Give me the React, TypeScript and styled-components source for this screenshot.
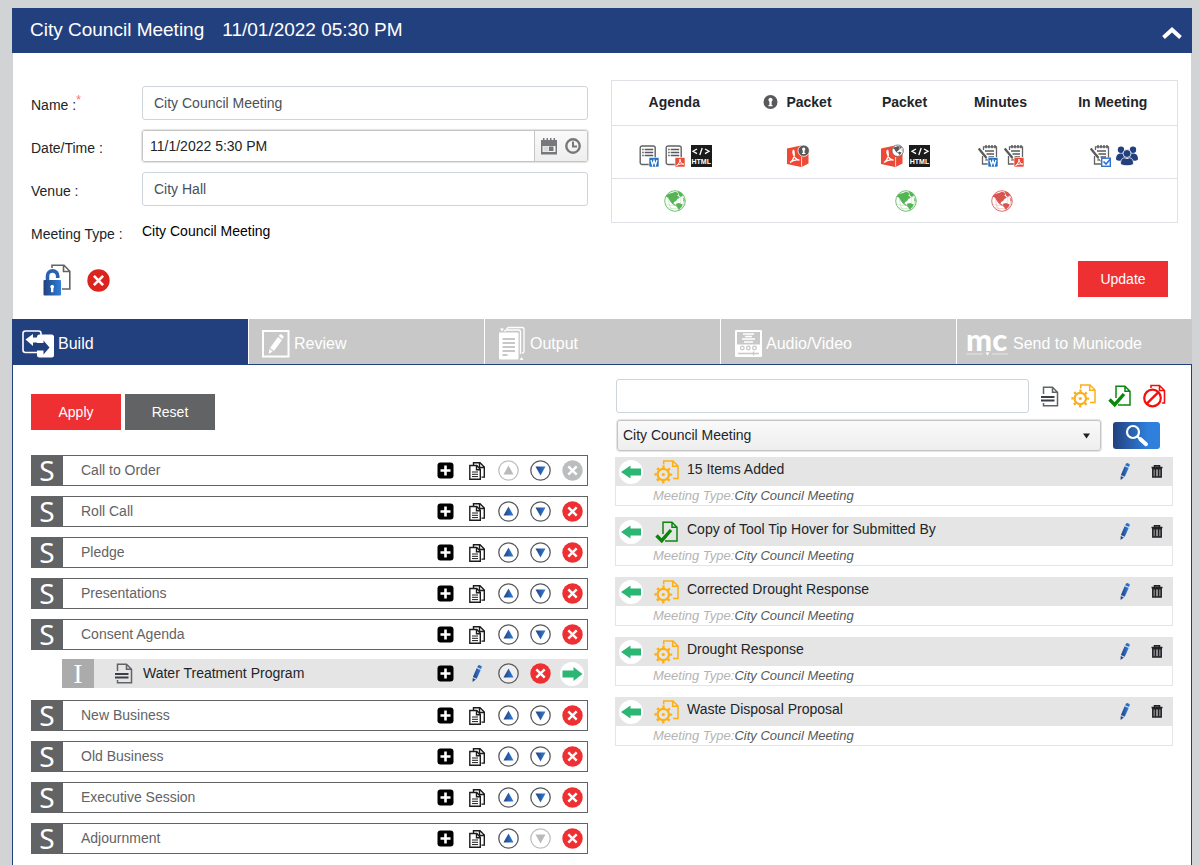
import React from "react";
import styled, { createGlobalStyle, css } from "styled-components";

const navy = "#23407e";
const red = "#ee3033";
const slate = "#626365";

const GlobalStyle = createGlobalStyle`
  *, *::before, *::after { box-sizing: border-box; }
  body {
    margin: 0;
    background: #d1d3d4;
    color: #212529;
    font-family: "Liberation Sans", Arial, sans-serif;
    font-size: 14px;
    line-height: 20px;
  }
  button, input, select { font: inherit; }
  svg { display: block; flex: none; overflow: visible; }
`;

/* ---------- layout ---------- */

const Page = styled.main`
  padding: 8px 8px 0 12px;
`;

const TitleBar = styled.header`
  display: flex;
  align-items: center;
  justify-content: space-between;
  height: 45px;
  padding: 0 10px 0 18px;
  background: ${navy};
  color: #fff;
`;

const Title = styled.h1`
  display: flex;
  gap: 18px;
  margin: 0;
  padding-bottom: 2px;
  font-size: 19px;
  font-weight: 400;
  line-height: 24px;
`;

const IconButton = styled.button`
  display: flex;
  align-items: center;
  justify-content: center;
  padding: 0;
  border: 0;
  background: none;
  color: inherit;
  cursor: pointer;
`;

const CollapseButton = styled(IconButton)`
  padding-top: 4px;
`;

const Details = styled.section`
  display: grid;
  grid-template-columns: minmax(0, 62fr) minmax(0, 63fr);
  column-gap: 23px;
  min-height: 266px;
  margin: 0 1px;
  padding: 27px 14px 22px 18px;
  background: #fff;
`;

const Form = styled.form`
  display: flex;
  flex-direction: column;
  gap: 9px;
  padding-top: 6px;
`;

const Field = styled.div`
  display: grid;
  grid-template-columns: 111px minmax(0, 1fr);
  align-items: center;
  min-height: 34px;
`;

const Label = styled.label`
  padding-top: 4px;
`;

const Required = styled.sup`
  color: #ff6b76;
  font-size: 12px;
  line-height: 0;
`;

const inputBox = css`
  width: 100%;
  height: 34px;
  border: 1px solid #ced4da;
  border-radius: 3px;
  background: #fff;
  color: #495057;
`;

const TextInput = styled.input`
  ${inputBox}
  padding: 0 11px;
`;

const DateBox = styled.div`
  display: flex;
  height: 32px;
  border: 1px solid #c5c5c5;
  border-radius: 3px;
  box-shadow: 0 0 1px 1px #e3e3e3;
  overflow: hidden;
`;

const DateInput = styled.input`
  flex: 1;
  min-width: 0;
  padding: 0 7px;
  border: 0;
  background: #fff;
  color: #212529;
`;

const PickerButtons = styled.div`
  display: flex;
  align-items: center;
  gap: 8px;
  padding: 0 6px;
  border-left: 1px solid #c5c5c5;
  background: linear-gradient(#fafafa, #eeeeee);
`;

const StaticValue = styled.output`
  padding-bottom: 3px;
  color: #000;
`;

const FormActions = styled.div`
  display: flex;
  align-items: center;
  gap: 16px;
  padding: 6px 0 0 12px;
`;

const Summary = styled.div`
  display: flex;
  flex-direction: column;
  justify-content: space-between;
`;

const OutputTable = styled.table`
  width: 100%;
  border: 1px solid #dee2e6;
  border-collapse: collapse;
  table-layout: fixed;
`;

const OutputRow = styled.tr<{ $height: number }>`
  height: ${(p) => p.$height}px;
  border-bottom: 1px solid #dee2e6;
`;

const Cell = styled.td<{ $low?: boolean }>`
  padding: ${(p) => (p.$low ? "8px 0 0" : "0")};
`;

const HeadCell = styled.th`
  padding: 0 2px 2px 0;
  font-weight: 700;
`;

const CellContent = styled.div`
  display: flex;
  align-items: center;
  justify-content: center;
  gap: 5px;
`;

const HeadContent = styled(CellContent)`
  gap: 8px;
`;

const Button = styled.button<{ $tone: string }>`
  width: 90px;
  height: 36px;
  padding: 0;
  border: 0;
  background: ${(p) => p.$tone};
  color: #fff;
  cursor: pointer;
`;

const UpdateRow = styled.div`
  display: flex;
  justify-content: flex-end;
  padding-right: 9px;
`;

const Tabs = styled.nav`
  display: grid;
  grid-template-columns: repeat(5, minmax(0, 1fr));
  border-bottom: 1px solid ${navy};
`;

const Tab = styled.button<{ $active?: boolean }>`
  display: flex;
  align-items: center;
  height: 45px;
  padding: 4px 0 0 9px;
  border: 0;
  border-left: 1px solid ${(p) => (p.$active ? navy : "#fff")};
  background: ${(p) => (p.$active ? navy : "#c8c8c8")};
  color: #fff;
  font-size: 16px;
  cursor: pointer;
`;

const TabIcon = styled.span`
  display: flex;
  align-items: center;
  min-width: 36px;
`;

const McLogo = styled.span`
  display: flex;
  flex-direction: column;
  width: 47px;
  padding-bottom: 4px;
  font-family: Lato, sans-serif;
  font-size: 31px;
  font-weight: 900;
  line-height: 25px;
  text-align: left;
`;

const Builder = styled.section`
  display: grid;
  grid-template-columns: minmax(0, 557fr) minmax(0, 558fr);
  column-gap: 27px;
  padding: 14px 18px 11px;
  border: solid ${navy};
  border-width: 0 1px;
  background: #fff;
`;

const AgendaPane = styled.div`
  padding-top: 15px;
`;

const ButtonRow = styled.div`
  display: flex;
  gap: 4px;
`;

const AgendaList = styled.ul`
  display: flex;
  flex-direction: column;
  gap: 10px;
  margin: 25px 0 0;
  padding: 0;
  list-style: none;
`;

const SectionRow = styled.li`
  display: flex;
  height: 31px;
  box-shadow: inset 0 0 0 1px ${slate};
  color: ${slate};
`;

const ItemRow = styled.li`
  display: flex;
  height: 29px;
  margin: -1px 0 2px 31px;
  background: #e5e5e5;
`;

const Badge = styled.span<{ $item?: boolean }>`
  display: flex;
  align-items: center;
  justify-content: center;
  flex: none;
  width: 32px;
  background: ${(p) => (p.$item ? "#ababab" : slate)};
  color: #fff;
  font-family: ${(p) => (p.$item ? '"Liberation Serif", serif' : '"Noto Sans", sans-serif')};
  font-size: 28px;
  line-height: 29px;
`;

const RowName = styled.span`
  flex: 1;
  padding: 5px 0 0 18px;
`;

const ItemName = styled.span`
  display: flex;
  flex: 1;
  gap: 10px;
  padding: 4px 0 0 21px;
`;

const RowActions = styled.div`
  display: grid;
  grid-template-columns: repeat(5, 1fr);
  align-items: center;
  width: 158px;
`;

const Library = styled.div`
  display: flex;
  flex-direction: column;
`;

const SearchRow = styled.div`
  display: flex;
  align-items: center;
  gap: 12px;
  padding: 0 7px 0 1px;
`;

const SearchInput = styled.input`
  ${inputBox}
  flex: 1;
  width: auto;
  min-width: 0;
  padding: 0 11px;
`;

const StatusFilters = styled.div`
  display: flex;
  align-items: center;
  gap: 12px;
`;

const FilterRow = styled.div`
  display: flex;
  align-items: center;
  gap: 12px;
  margin: 7px 0 6px;
  padding: 0 13px 0 2px;
`;

const SelectWrap = styled.div`
  display: grid;
  flex: 1;
  align-items: center;
  & > * { grid-area: 1 / 1; }
  & > svg { justify-self: end; margin-right: 11px; pointer-events: none; }
`;

const TypeSelect = styled.select`
  width: 100%;
  height: 31px;
  padding: 0 5px 2px;
  border: 1px solid #c5c5c5;
  border-radius: 3px;
  box-shadow: 0 0 1px 1px #e3e3e3;
  background: linear-gradient(#fafafa, #eeeeee);
  color: #212529;
  appearance: none;
`;

const SearchButton = styled(IconButton)`
  width: 47px;
  height: 27px;
  border-radius: 3px;
  background: linear-gradient(90deg, ${navy}, #2f80dd 75%);
`;

const CardList = styled.ul`
  display: flex;
  flex-direction: column;
  gap: 11px;
  margin: 0;
  padding: 0;
  list-style: none;
`;

const Card = styled.li`
  border: 1px solid #e5e5e5;
  border-top: 0;
`;

const CardHead = styled.div`
  display: grid;
  grid-template-columns: 30px 41px 1fr 32px 31px;
  align-items: center;
  height: 29px;
  background: #e5e5e5;
`;

const CardTitle = styled.span`
  padding-bottom: 5px;
`;

const CardMeta = styled.div`
  padding-left: 37px;
  color: #b4b4b4;
  font-size: 13px;
  font-style: italic;
  line-height: 19px;
`;

const MetaValue = styled.span`
  color: #58595b;
`;

/* ---------- icons ---------- */

const Gradients = () => (
  <svg width="0" height="0" style={{ position: "absolute" }} aria-hidden="true">
    <defs>
      <linearGradient id="blue" x1="0" x2="1" y1="0" y2="0">
        <stop offset="0" stopColor="#23407e" />
        <stop offset="1" stopColor="#2f80dd" />
      </linearGradient>
    </defs>
  </svg>
);

const Chevron = () => (
  <svg width="20" height="12" viewBox="0 0 20 12" fill="none" stroke="#fff" strokeWidth="4">
    <path d="M1.500 10.500 10 2.800l8.500 7.700" strokeLinejoin="miter" />
  </svg>
);

const CalendarIcon = () => (
  <svg width="16" height="17" viewBox="0 0 16 17">
    <path fill="#77787b" d="M0 2h2V0h1.500v2h2V0H7v2h2V0h1.500v2h2V0H14v2h2v14.500H0z" />
    <path fill="#f4f4f4" d="M1.500 8h13v6h-13z" />
    <path fill="#9a9b9e" d="M2.500 8.500h5v5h-5z" opacity=".3" />
    <path fill="#77787b" d="M8 8.500h4.500v4.500H8z" />
  </svg>
);

const ClockIcon = () => (
  <svg width="16" height="16" viewBox="0 0 16 16" fill="none" stroke="#77787b" strokeWidth="2.400">
    <circle cx="8" cy="8" r="6.700" />
    <path d="M8 3.500V8.500h4" strokeWidth="2" />
  </svg>
);

const UnlockDocIcon = () => (
  <svg width="28" height="32" viewBox="0 0 28 32">
    <path d="M9 4V1.200h12l5.800 6V25H19M20.500 1.500v6h6" fill="none" stroke="#626365" strokeWidth="1.600" />
    <path d="M4.500 17v-5a5 5 0 0 1 10.200 0V13" fill="none" stroke="#fff" strokeWidth="6" />
    <path d="M4.500 17v-5a5 5 0 0 1 10.200 0V14" fill="none" stroke="#2a62b0" strokeWidth="3.600" />
    <rect x=".5" y="16" width="17.500" height="15.500" rx="1" fill="url(#blue)" />
    <path d="M9.200 20.700a2 2 0 0 1 1.200 3.500v4H8v-4a2 2 0 0 1 1.200-3.500z" fill="#fff" />
  </svg>
);

const CloseIcon = ({ size = 21, color = red }: { size?: number; color?: string }) => (
  <svg width={size} height={size} viewBox="0 0 21 21">
    <circle cx="10.500" cy="10.500" r="10.200" fill={color} />
    <path d="M6.300 6.300l8.400 8.400M14.700 6.300l-8.400 8.400" stroke="#fff" strokeWidth="2.400" />
  </svg>
);

const KeyholeIcon = () => (
  <svg width="15" height="14" viewBox="0 0 14 14">
    <circle cx="7" cy="7" r="7" fill="#58595b" />
    <path d="M7 2.800a2.100 2.100 0 0 1 1.100 3.900V10H9v1.200H5V10h.9V6.700A2.100 2.100 0 0 1 7 2.800z" fill="#fff" />
  </svg>
);

const WordBadge = () => (
  <g>
    <rect x="10" y="12.500" width="10" height="9.500" rx="1" fill="#2271c3" stroke="#fff" strokeWidth=".6" />
    <path d="M12 15l1.500 5 1.500-4.500 1.500 4.500 1.500-5" fill="none" stroke="#fff" strokeWidth="1.300" />
  </g>
);

const PdfBadge = () => (
  <g>
    <rect x="10" y="12.500" width="10" height="9.500" rx="1" fill="#ee4836" stroke="#fff" strokeWidth=".6" />
    <path d="M11.500 20.500c2-1 3.500-3.500 3.500-6.500 0 3 1.500 5 3.800 5.200-2.500-.6-5 0-7.300 1.300z" fill="none" stroke="#fff" strokeWidth="1" />
  </g>
);

const CheckBadge = () => (
  <g>
    <rect x="11.700" y="13.200" width="8.600" height="8.100" fill="#fff" stroke="#2f72d0" strokeWidth="1.400" />
    <path d="M13.500 16.500l2.500 2.500L20.500 14" fill="none" stroke="#2f72d0" strokeWidth="1.600" />
  </g>
);

const AgendaDoc = ({ kind }: { kind: "word" | "pdf" }) => (
  <svg width="21" height="22" viewBox="0 0 21 22">
    <rect x="1.200" y="1" width="15" height="18.500" rx="2" fill="#fff" stroke="#626365" strokeWidth="1.400" />
    <path d="M3.200 4.500h1.500M3.200 7.500h1.500M3.200 10.500h1.500M5.700 4.500h8.500M5.700 7.500h8.500M5.700 10.500h8.500" stroke="#58595b" strokeWidth="1.400" />
    {kind === "word" ? <WordBadge /> : <PdfBadge />}
  </svg>
);

const MinutesDoc = ({ kind }: { kind: "word" | "pdf" | "check" }) => (
  <svg width="21" height="22" viewBox="0 0 21 22">
    <path d="M5.500 5V1.800h13V12.500M4.500 11v8H11" fill="none" stroke="#626365" strokeWidth="1.300" />
    <path d="M8 0v3.200M11 0v3.200M14 0v3.200M17 0v3.200" stroke="#58595b" strokeWidth="1.500" />
    <path d="M7 6h9M8.500 9h7.500M10.500 12H16" stroke="#58595b" strokeWidth="1.600" />
    <path d="M.7 3.500l7.800 9.500" stroke="#58595b" strokeWidth="2.300" />
    <path d="M8 13.500l2.800 2.700M7 15h3" stroke="#58595b" strokeWidth="1" />
    {kind === "word" ? <WordBadge /> : kind === "pdf" ? <PdfBadge /> : <CheckBadge />}
  </svg>
);

const HtmlMark = styled.span`
  display: flex;
  flex-direction: column;
  align-items: center;
  gap: 1px;
  width: 21px;
  height: 22px;
  padding-top: 2px;
  background: #1b1b1b;
  color: #fff;
  font-size: 7px;
  font-weight: 700;
  line-height: 9px;
`;

const HtmlIcon = () => (
  <HtmlMark>
    <svg width="18" height="9" viewBox="0 0 18 9" fill="none" stroke="#fff" strokeWidth="1.300">
      <path d="M5 2L1 4.300l4 2.300M13 2l4 2.300-4 2.300M10.200 1L7.800 8" />
    </svg>
    <span>HTML</span>
  </HtmlMark>
);

const Continents = () => (
  <g>
    <path d="M1.500 6.500L4 4l4-1 3-1.200 2.500.8.800 1.600-1 1.200 1.500 1 1 1.400-2.500 1.200-1.200 2.100-2.100.9-.4 1.700 1.700.8 1 1.200-1.600-.3-2.600-1.700-2-2.500-2-3.400z" />
    <path d="M13.800 1.500l3.200.9 2.300 2.500-2.300 2-2-1.400z" />
    <path d="M12 13.800l3-.8 3.500 1.500-.8 2.200-1.600 1.500-1 2.300-1.200-2.400-1.600-1.700z" />
    <path d="M19 7.500l2 1.500-.3 3.500-1.700-2z" opacity=".6" />
  </g>
);

const GlobeIcon = ({ color }: { color: string }) => (
  <svg width="22" height="22" viewBox="0 0 22 22" fill={color}>
    <circle cx="11" cy="11" r="10.300" fill="#fff" stroke={color} strokeWidth="1" strokeOpacity=".8" />
    <path d="M1.500 14c5 2 14 2 19 0M3.500 17.500c5 1.500 10 1.500 15 0M8 1c-5 6-4 15 1 20M14 1c4 6 4 14-1 20M16 2c5 6 4 12 1 17" fill="none" stroke={color} strokeWidth=".5" opacity=".5" />
    <Continents />
  </svg>
);

const PacketIcon = ({ publicCopy }: { publicCopy?: boolean }) => (
  <svg width="23" height="22" viewBox="0 0 23 22">
    <path d="M0 3.500L14 .5v21.500L0 19z" fill="#ee4836" />
    <path d="M14 1.500L21.500 5v13.500L15 21.800h-1z" fill="#ee4836" />
    <path d="M14.600 12v9.500" stroke="#fff" strokeWidth=".8" />
    <path d="M3 17.500c3-2 5-6.500 4-11.500-.6-1.500-1.600 0-1 2 .8 3.500 3 6.800 6.500 7.200-3.500-1-7 .3-9.500 2.300z" fill="none" stroke="#fff" strokeWidth="1.200" />
    <circle cx="16.700" cy="5.700" r="5.700" fill={publicCopy ? "#fff" : "#58595b"} stroke={publicCopy ? "#626365" : "#fff"} strokeWidth=".8" />
    {publicCopy ? (
      <g transform="translate(11.200 .2) scale(.5)" fill="#58595b"><Continents /></g>
    ) : (
      <path d="M16.700 2.500a1.700 1.700 0 0 1 .9 3.100V8h.8v1h-3.400V8h.8V5.600a1.700 1.700 0 0 1 .9-3.100z" fill="#fff" />
    )}
  </svg>
);

const PeopleIcon = () => (
  <svg width="22" height="20" viewBox="0 0 22 20" fill="#23407e">
    <circle cx="5" cy="3.700" r="3.200" />
    <circle cx="17" cy="3.700" r="3.200" />
    <path d="M0 13.500C0 9.500 1.500 7.500 5 7.500h12c3.500 0 5 2 5 6-1 1-2 1.300-4 1.300H4c-2 0-3-.3-4-1.300z" />
    <circle cx="11" cy="7.500" r="4" stroke="#fff" strokeWidth=".8" />
    <path d="M4.500 18c0-4.200 1.700-6 4-6.200 1.500 1 3.500 1 5 0 2.300.2 4 2 4 6.200-2 2.300-11 2.300-13 0z" stroke="#fff" strokeWidth=".8" />
  </svg>
);

const BuildIcon = () => (
  <svg width="33" height="28" viewBox="0 0 33 28">
    <rect x="1" y="1" width="18" height="21.500" rx="2.500" fill="none" stroke="#fff" strokeWidth="1.600" />
    <rect x="15" y="4.500" width="17" height="23" rx="2.500" fill="#fff" />
    <path d="M3.500 9.500L11 4v3.500h9v5h-9V16z" fill="#fff" />
    <path d="M12 13h9.500v-2.500l6 7-6 7V20.500h-6.500v-3.500H12z" fill={navy} />
  </svg>
);

const ReviewIcon = () => (
  <svg width="34" height="28" viewBox="-5 0 34 28">
    <rect x="0" y="1" width="25.500" height="25.500" fill="none" stroke="#fff" strokeWidth="2" />
    <path d="M15 7l4 3-8 11-4-3z" fill="#fff" />
    <path d="M15.700 6l1-1.300c.6-.6 1.400-.6 2 0l1.400 1.100c.7.600.7 1.300.2 2l-.8 1.100zM6.300 19l3.400 2.600-4 2.400z" fill="#fff" />
  </svg>
);

const OutputIcon = () => (
  <svg width="34" height="34" viewBox="-5 1 34 34" fill="none" stroke="#fff">
    <path d="M8 3.500V3a2 2 0 0 1 2-1.500h13.500A1.500 1.500 0 0 1 25 3v22a2 2 0 0 1-2 2M5.500 5.500a2 2 0 0 1 2-1.500h12a2 2 0 0 1 2 2V28" strokeWidth="1.300" />
    <rect x="0" y="6.500" width="19.500" height="27" rx="1" fill="#fff" stroke="none" />
    <path d="M3.500 13h12.500M3.500 17h12.500M3.500 21h12.500M3.500 25h12.500M3.500 29h5" stroke="#c8c8c8" strokeWidth="2" />
    <path d="M1 2.500h4l-2 3zM20.500 34h4l-2-3z" fill="#fff" stroke="none" />
  </svg>
);

const MediaIcon = () => (
  <svg width="34" height="28" viewBox="-5 0 34 28">
    <rect x="0" y="0" width="27" height="27" rx="1" fill="#fff" />
    <rect x="2" y="2" width="23" height="12.500" fill="#c8c8c8" />
    <path d="M8 4h11M10 6.500h7M7 9h13M9 12h9" stroke="#fff" strokeWidth="1.500" />
    <g fill="none" stroke="#c8c8c8" strokeWidth="1.300">
      <circle cx="7.300" cy="18" r="1.800" /><circle cx="13.300" cy="18" r="1.800" /><circle cx="19.500" cy="18" r="1.800" />
      <path d="M3 23.500h21M18.500 21.500v4" />
    </g>
  </svg>
);

const McRule = () => (
  <svg width="42" height="5" viewBox="0 0 42 5">
    <path d="M0 2h17M26 2h16" stroke="#e4e4e4" strokeWidth="1" />
    <path d="M19.500 .5h4l-2 3z" fill="#fff" />
  </svg>
);

const DraftDoc = () => (
  <svg width="18" height="21" viewBox="0 0 18 21">
    <path d="M2.500 8V1.200h9l5 5v13.500h-14V17M11.500 1.200v5h5" fill="none" stroke="#626365" strokeWidth="1.500" />
    <path d="M0 11h13.500M0 14.500h13.500" stroke="#3a3f4a" strokeWidth="2.200" />
  </svg>
);

const GearDoc = () => (
  <svg width="25" height="24" viewBox="0 0 25 24" fill="none" stroke="#fbb019">
    <path d="M9.700 4.500V1h9.300l5 5v12.500h-5M18.700 1v5.300H24" strokeWidth="1.500" />
    <circle cx="9.300" cy="14.500" r="5.700" strokeWidth="2.200" />
    <circle cx="9.300" cy="14.500" r="7.600" strokeWidth="2.600" strokeDasharray="2.400 3.569" strokeDashoffset="1.200" />
    <circle cx="9.300" cy="14.500" r="1.600" fill="#fbb019" stroke="none" />
  </svg>
);

const CheckDoc = () => (
  <svg width="23" height="22" viewBox="0 0 23 22" fill="none" stroke="#0b860b">
    <path d="M8 13V1.300h9l5 5v13.700H10M17 1.300v5h5" strokeWidth="1.500" />
    <path d="M1.500 14.500l5.200 5.200L16 9" strokeWidth="3.400" />
  </svg>
);

const BlockedDoc = () => (
  <svg width="23" height="24" viewBox="0 0 23 24" fill="none" stroke="#f60f0f">
    <path d="M8 4V1.500h8.500l5 5v12.500h-2.500M16.500 1.500v5h5" strokeWidth="1.600" />
    <circle cx="9.500" cy="14" r="8.300" fill="#fff" strokeWidth="2.200" />
    <path d="M3.600 19.900L15.400 8.100" strokeWidth="2.400" />
  </svg>
);

const SearchIcon = () => (
  <svg width="24" height="23" viewBox="0 0 24 23" fill="none" stroke="#fff">
    <circle cx="8" cy="8" r="6" strokeWidth="2.200" />
    <path d="M12.500 12.500l3 3" strokeWidth="2.200" />
    <path d="M15.500 15.200l5.500 5" strokeWidth="4" strokeLinecap="round" />
  </svg>
);

const PlusIcon = () => (
  <svg width="17" height="17" viewBox="0 0 17 17">
    <rect x=".5" y=".5" width="16" height="16" rx="3" fill="#000" />
    <path d="M8.500 3.500v10M3.500 8.500h10" stroke="#fff" strokeWidth="2.600" />
  </svg>
);

const CopyIcon = () => (
  <svg width="16" height="18" viewBox="0 0 16 18" fill="none" stroke="#1c1c1c" strokeWidth="1.400">
    <path d="M4.500 3.500V.8h6.500l4.300 4.300v10H12.500M10.500 1v4.500H15" />
    <path d="M.8 3.500h7l3.500 3.700v10H.8zM7.500 3.700v4h3.500" fill="#fff" />
    <path d="M3 10h6M3 12.300h6M3 14.600h6" strokeWidth="1" />
  </svg>
);

const ArrowCircle = ({ down, muted }: { down?: boolean; muted?: boolean }) => (
  <svg width="21" height="21" viewBox="0 0 21 21">
    <circle cx="10.500" cy="10.500" r="9.700" fill="#fff" fillOpacity=".4" stroke={muted ? "#bfbfbf" : "#58595b"} strokeWidth="1.300" />
    <path d={down ? "M5.500 6.500h10l-5 9z" : "M5.500 14.500h10l-5-9z"} fill={muted ? "#b9babb" : "url(#blue)"} />
  </svg>
);

const PencilIcon = () => (
  <svg width="10" height="17" viewBox="0 0 10 17" fill="url(#blue)">
    <path d="M4.600 3.200L8.700 5 4.700 13.700.9 12z" />
    <path d="M5.200 2.200L6 .8C6.400.1 7 0 7.700.2l1.300.6c.8.4 1 1 .7 1.700l-.7 1.500zM.7 12.900l3.200 1.500L.6 17z" />
  </svg>
);

const TrashIcon = () => (
  <svg width="12" height="13" viewBox="0 0 12 13">
    <path d="M.5 2.500h11M3.500 2V.8h5V2" fill="none" stroke="#222" strokeWidth="1.500" />
    <path d="M1.800 3.800h8.400V12H1.800z" fill="#8a8f94" stroke="#222" strokeWidth="1.500" />
    <path d="M4.400 4v8M7.600 4v8" stroke="#222" strokeWidth="1.200" />
  </svg>
);

const MoveIcon = ({ right }: { right?: boolean }) => (
  <svg width="24" height="24" viewBox="0 0 24 24">
    <circle cx="12" cy="12" r="12" fill="#fff" />
    <path
      d={right ? "M2.500 8.500h11V5l9 7-9 7v-3.500h-11z" : "M22 8.500H11.500V5.500L2 12l9.500 6.500V15.500H22z"}
      fill="#2bb673"
    />
  </svg>
);

const Caret = () => (
  <svg width="7" height="6" viewBox="0 0 7 6"><path d="M0 .5h7l-3.500 5z" fill="#222" /></svg>
);

/* ---------- data ---------- */

type AgendaEntry = { name: string; item?: boolean; first?: boolean; last?: boolean };

const agenda: AgendaEntry[] = [
  { name: "Call to Order", first: true },
  { name: "Roll Call" },
  { name: "Pledge" },
  { name: "Presentations" },
  { name: "Consent Agenda" },
  { name: "Water Treatment Program", item: true },
  { name: "New Business" },
  { name: "Old Business" },
  { name: "Executive Session" },
  { name: "Adjournment", last: true },
];

const library = [
  { title: "15 Items Added", done: false },
  { title: "Copy of Tool Tip Hover for Submitted By", done: true },
  { title: "Corrected Drought Response", done: false },
  { title: "Drought Response", done: false },
  { title: "Waste Disposal Proposal", done: false },
];

const Act = ({ label, children }: { label: string; children: React.ReactNode }) => (
  <IconButton type="button" aria-label={label}>{children}</IconButton>
);

const AgendaRow = ({ entry }: { entry: AgendaEntry }) =>
  entry.item ? (
    <ItemRow>
      <Badge $item>I</Badge>
      <ItemName><DraftDoc />{entry.name}</ItemName>
      <RowActions>
        <Act label="Add"><PlusIcon /></Act>
        <Act label="Edit"><PencilIcon /></Act>
        <Act label="Move up"><ArrowCircle /></Act>
        <Act label="Remove"><CloseIcon /></Act>
        <Act label="Send to library"><MoveIcon right /></Act>
      </RowActions>
    </ItemRow>
  ) : (
    <SectionRow>
      <Badge>S</Badge>
      <RowName>{entry.name}</RowName>
      <RowActions>
        <Act label="Add"><PlusIcon /></Act>
        <Act label="Copy"><CopyIcon /></Act>
        <Act label="Move up"><ArrowCircle muted={entry.first} /></Act>
        <Act label="Move down"><ArrowCircle down muted={entry.last} /></Act>
        <Act label="Remove"><CloseIcon color={entry.first ? "#bcbdbe" : red} /></Act>
      </RowActions>
    </SectionRow>
  );

export default function App() {
  return (
    <Page>
      <GlobalStyle />
      <Gradients />
      <TitleBar>
        <Title><span>City Council Meeting</span><span>11/01/2022 05:30 PM</span></Title>
        <CollapseButton type="button" aria-label="Collapse"><Chevron /></CollapseButton>
      </TitleBar>

      <Details>
        <Form>
          <Field>
            <Label htmlFor="name">Name :<Required>*</Required></Label>
            <TextInput id="name" defaultValue="City Council Meeting" />
          </Field>
          <Field>
            <Label htmlFor="date">Date/Time :</Label>
            <DateBox>
              <DateInput id="date" defaultValue="11/1/2022 5:30 PM" />
              <PickerButtons>
                <Act label="Pick a date"><CalendarIcon /></Act>
                <Act label="Pick a time"><ClockIcon /></Act>
              </PickerButtons>
            </DateBox>
          </Field>
          <Field>
            <Label htmlFor="venue">Venue :</Label>
            <TextInput id="venue" defaultValue="City Hall" />
          </Field>
          <Field>
            <Label htmlFor="type">Meeting Type :</Label>
            <StaticValue id="type">City Council Meeting</StaticValue>
          </Field>
          <FormActions>
            <Act label="Unlock document"><UnlockDocIcon /></Act>
            <Act label="Cancel meeting"><CloseIcon size={23} color="#dc241f" /></Act>
          </FormActions>
        </Form>

        <Summary>
          <OutputTable>
            <colgroup>
              <col width="127" /><col width="120" /><col width="94" /><col width="98" /><col width="127" />
            </colgroup>
            <thead>
              <OutputRow $height={45}>
                <HeadCell>Agenda</HeadCell>
                <HeadCell><HeadContent><KeyholeIcon />Packet</HeadContent></HeadCell>
                <HeadCell>Packet</HeadCell>
                <HeadCell>Minutes</HeadCell>
                <HeadCell>In Meeting</HeadCell>
              </OutputRow>
            </thead>
            <tbody>
              <OutputRow $height={53}>
                <Cell $low>
                  <CellContent>
                    <Act label="Agenda as Word"><AgendaDoc kind="word" /></Act>
                    <Act label="Agenda as PDF"><AgendaDoc kind="pdf" /></Act>
                    <Act label="Agenda as HTML"><HtmlIcon /></Act>
                  </CellContent>
                </Cell>
                <Cell $low><CellContent><Act label="Private packet"><PacketIcon /></Act></CellContent></Cell>
                <Cell $low>
                  <CellContent>
                    <Act label="Public packet"><PacketIcon publicCopy /></Act>
                    <Act label="Packet as HTML"><HtmlIcon /></Act>
                  </CellContent>
                </Cell>
                <Cell $low>
                  <CellContent>
                    <Act label="Minutes as Word"><MinutesDoc kind="word" /></Act>
                    <Act label="Minutes as PDF"><MinutesDoc kind="pdf" /></Act>
                  </CellContent>
                </Cell>
                <Cell $low>
                  <CellContent>
                    <Act label="Take minutes"><MinutesDoc kind="check" /></Act>
                    <Act label="Attendance"><PeopleIcon /></Act>
                  </CellContent>
                </Cell>
              </OutputRow>
              <OutputRow $height={44}>
                <Cell><CellContent><Act label="Publish agenda"><GlobeIcon color="#55b555" /></Act></CellContent></Cell>
                <Cell />
                <Cell><CellContent><Act label="Publish packet"><GlobeIcon color="#55b555" /></Act></CellContent></Cell>
                <Cell><CellContent><Act label="Publish minutes"><GlobeIcon color="#d9534f" /></Act></CellContent></Cell>
                <Cell />
              </OutputRow>
            </tbody>
          </OutputTable>
          <UpdateRow><Button type="button" $tone={red}>Update</Button></UpdateRow>
        </Summary>
      </Details>

      <Tabs>
        <Tab type="button" $active><TabIcon><BuildIcon /></TabIcon>Build</Tab>
        <Tab type="button"><TabIcon><ReviewIcon /></TabIcon>Review</Tab>
        <Tab type="button"><TabIcon><OutputIcon /></TabIcon>Output</Tab>
        <Tab type="button"><TabIcon><MediaIcon /></TabIcon>Audio/Video</Tab>
        <Tab type="button"><McLogo>mc<McRule /></McLogo>Send to Municode</Tab>
      </Tabs>

      <Builder>
        <AgendaPane>
          <ButtonRow>
            <Button type="button" $tone={red}>Apply</Button>
            <Button type="button" $tone={slate}>Reset</Button>
          </ButtonRow>
          <AgendaList>
            {agenda.map((entry) => <AgendaRow key={entry.name} entry={entry} />)}
          </AgendaList>
        </AgendaPane>

        <Library>
          <SearchRow>
            <SearchInput aria-label="Search items" />
            <StatusFilters>
              <Act label="Drafts"><DraftDoc /></Act>
              <Act label="In progress"><GearDoc /></Act>
              <Act label="Approved"><CheckDoc /></Act>
              <Act label="Rejected"><BlockedDoc /></Act>
            </StatusFilters>
          </SearchRow>
          <FilterRow>
            <SelectWrap>
              <TypeSelect aria-label="Meeting type" defaultValue="council">
                <option value="council">City Council Meeting</option>
              </TypeSelect>
              <Caret />
            </SelectWrap>
            <SearchButton type="button" aria-label="Search"><SearchIcon /></SearchButton>
          </FilterRow>
          <CardList>
            {library.map((card) => (
              <Card key={card.title}>
                <CardHead>
                  <Act label="Add to agenda"><MoveIcon /></Act>
                  <Act label="Status">{card.done ? <CheckDoc /> : <GearDoc />}</Act>
                  <CardTitle>{card.title}</CardTitle>
                  <Act label="Edit"><PencilIcon /></Act>
                  <Act label="Delete"><TrashIcon /></Act>
                </CardHead>
                <CardMeta>Meeting Type:<MetaValue>City Council Meeting</MetaValue></CardMeta>
              </Card>
            ))}
          </CardList>
        </Library>
      </Builder>
    </Page>
  );
}
